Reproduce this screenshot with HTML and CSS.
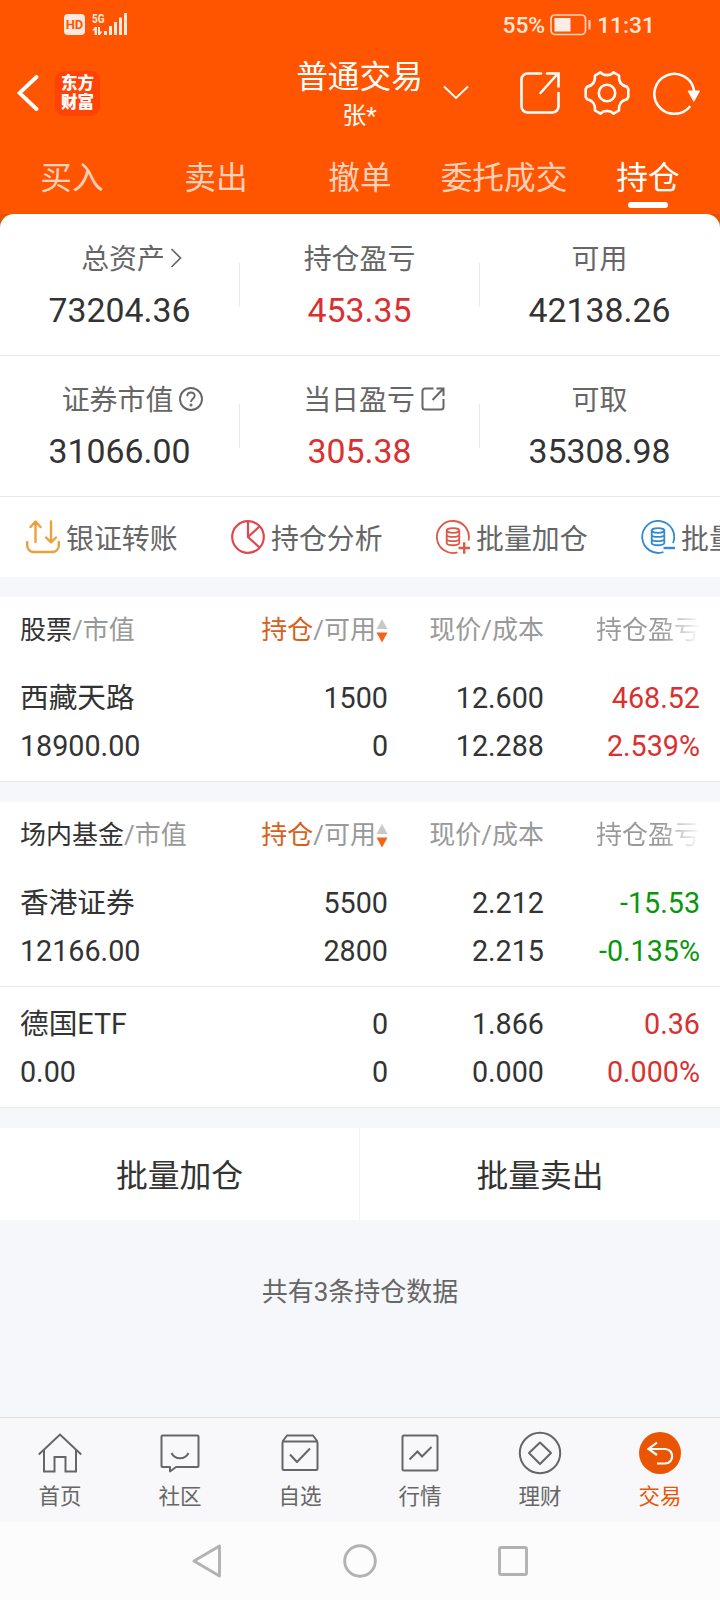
FILE: index.html
```html
<!DOCTYPE html>
<html lang="zh-CN">
<head>
<meta charset="utf-8">
<title>持仓</title>
<link rel="stylesheet" href="styles.css">
</head>
<body>
<div class="screen">
  <header class="top">
    <div class="status">
      <div class="status-left">
        <span class="hd">HD</span>
        <svg class="signal" width="36" height="24" viewBox="0 0 36 24" fill="#ffe9df">
          <text x="0" y="10" font-size="13.500" font-weight="700" textLength="12.500" lengthAdjust="spacingAndGlyphs">5G</text>
          <path d="M0 17.500L3 14h2v8H2.600v-4.500zM6 14h2v4.500h2.400L8 22H6z"/>
          <path d="M12 18h3v4h-3zM17 13h3v9h-3zM22 9h3v13h-3zM27 4.500h3V22h-3zM32 0h3v22h-3z"/>
        </svg>
      </div>
      <div class="status-right">
        <span>55%</span>
        <svg class="battery" width="42" height="22" viewBox="0 0 42 22" fill="none" stroke="#ffd2bd" stroke-width="1.700"><rect x="1" y="1" width="34.500" height="19.500" rx="4"/><rect x="4.500" y="4" width="16" height="13.500" fill="#ffece4" stroke="none"/><path d="M39.500 6v9.500" stroke-width="2.200"/></svg>
        <span>11:31</span>
      </div>
    </div>
    <div class="titlebar">
      <div class="title-left">
        <svg width="22" height="36" viewBox="0 0 22 36" fill="none" stroke="#fff" stroke-width="3.800" stroke-linecap="round"><path d="M19.500 2L2.500 18l17 16"/></svg>
        <div class="logo"><span>东方</span><span>财富</span></div>
      </div>
      <div class="title-mid"><div class="title">普通交易</div><div class="sub">张*</div></div>
      <div class="title-right">
        <svg class="chev" width="26" height="16" viewBox="0 0 26 16" fill="none" stroke="#fff" stroke-width="1.900"><path d="M1 1.500l12 11.500L25 1.500"/></svg>
        <svg class="share" width="42" height="44" viewBox="0 0 42 44" fill="none" stroke="#fff" stroke-width="2.600" stroke-linecap="round"><path d="M22 2.500H8.500a6 6 0 0 0-6 6v27a6 6 0 0 0 6 6h25a6 6 0 0 0 6-6V22M28 2.500h11.500v13M38.500 3L21.500 22"/></svg>
        <svg class="gear" width="46" height="46" viewBox="0 0 46 46" fill="none" stroke="#fff" stroke-width="2.600" stroke-linejoin="round"><path d="M16.500 2.300C19 6 27 6 29.500 2.300L35 5.500C34.500 11.500 37 15.500 43 16.800L44.300 19V27L43 29.200C37 30.500 34.500 34.500 35 40.500L29.500 43.700C27 40 19 40 16.500 43.700L11 40.500C11.500 34.500 9 30.500 3 29.200L1.700 27V19L3 16.800C9 15.500 11.500 11.500 11 5.500Z"/><circle cx="23" cy="23" r="8.200"/></svg>
        <svg class="reload" width="48" height="44" viewBox="0 0 48 44" fill="none" stroke="#fff" stroke-width="2.600" stroke-linecap="round"><path d="M36.500 36A20 20 0 1 1 41 19"/><path d="M35.500 20H46.500L41 30Z" fill="#fff" stroke-width="1"/></svg>
      </div>
    </div>
    <nav class="tabs"><span>买入</span><span>卖出</span><span>撤单</span><span>委托成交</span><span class="on">持仓</span></nav>
  </header>

  <div class="corners"><section class="summary">
    <div class="srow">
      <div class="stat"><div class="label first">总资产<svg class="gt" width="12" height="20" viewBox="0 0 12 20" fill="none" stroke="#666" stroke-width="1.700"><path d="M1.500 1l9 9-9 9"/></svg></div><div class="val">73204.36</div></div>
      <div class="stat"><div class="label">持仓盈亏</div><div class="val red">453.35</div></div>
      <div class="stat"><div class="label">可用</div><div class="val">42138.26</div></div>
    </div>
    <div class="srow">
      <div class="stat"><div class="label first">证券市值<svg class="help" width="24" height="24" viewBox="0 0 24 24" fill="none" stroke="#666" stroke-width="1.900"><circle cx="12" cy="12" r="11"/><path d="M8.300 9.200c0-5 7.400-4.800 7.400-.4 0 3-3.700 3-3.700 6.200"/><circle cx="12" cy="18" r=".6"/></svg></div><div class="val">31066.00</div></div>
      <div class="stat"><div class="label pad">当日盈亏<svg class="out" width="24" height="24" viewBox="0 0 24 24" fill="none" stroke="#666" stroke-width="2"><path d="M12.500 1.500H4A2.500 2.500 0 0 0 1.500 4v16A2.500 2.500 0 0 0 4 22.500h16a2.500 2.500 0 0 0 2.500-2.500v-8M15.500 1.500h7v7.500M22 2L11.500 13"/></svg></div><div class="val red">305.38</div></div>
      <div class="stat"><div class="label">可取</div><div class="val">35308.98</div></div>
    </div>
  </section></div>

  <div class="quick">
    <div class="q"><svg width="34" height="34" viewBox="0 0 34 34" fill="none" stroke="#eba03c" stroke-width="2.400" stroke-linecap="round" stroke-linejoin="round"><path d="M1.200 22v3.500a6.500 6.500 0 0 0 6.500 6.500h18.600a6.500 6.500 0 0 0 6.500-6.500V22M9.500 22V2M4.500 7l5-5.500 5 5.500M25 1.500V22M20 17.500l5 5 5-5"/></svg>银证转账</div>
    <div class="q"><svg width="34" height="34" viewBox="0 0 34 34" fill="none" stroke="#e0474c" stroke-width="2.200"><circle cx="17" cy="17" r="15.800"/><path d="M17 1v16l11.500 10.500M17 17L28.500 6.500"/></svg>持仓分析</div>
    <div class="q"><svg width="34" height="34" viewBox="0 0 34 34" fill="none" stroke="#dc5a45" stroke-width="1.800"><path d="M32.500 20.500A16 16 0 1 0 21.500 32.300"/><ellipse cx="17" cy="10.500" rx="6.300" ry="2.300"/><path d="M10.700 10.500v12.500c0 3 12.600 3 12.600 0V10.500M10.700 14.700c0 3 12.600 3 12.600 0M10.700 18.900c0 3 12.600 3 12.600 0"/><path d="M22.500 28h11.500M28.200 22.200v11.600" stroke-width="2.400"/></svg>批量加仓</div>
    <div class="q"><svg width="34" height="34" viewBox="0 0 34 34" fill="none" stroke="#3289d0" stroke-width="1.800"><path d="M32 23A16 16 0 1 0 22.500 32"/><ellipse cx="17" cy="10.500" rx="6.300" ry="2.300"/><path d="M10.700 10.500v12.500c0 3 12.600 3 12.600 0V10.500M10.700 14.700c0 3 12.600 3 12.600 0M10.700 18.900c0 3 12.600 3 12.600 0"/><path d="M22.500 28h11.500" stroke-width="2.400"/></svg>批量卖出</div>
  </div>

  <section class="table">
    <div class="thead"><span class="c1"><b>股票</b>/市值</span><span class="c2"><em>持仓</em>/可用<svg width="12" height="24" viewBox="0 0 12 24"><path d="M6 0l5.500 10H.5z" fill="#c8c8c8"/><path d="M6 23.500L.5 13.500h11z" fill="#f26419"/></svg></span><span class="c3">现价/成本</span><span class="c4 fade">持仓盈亏</span></div>
    <div class="hold">
      <div class="line"><span class="c1">西藏天路</span><span class="c2">1500</span><span class="c3">12.600</span><span class="c4 red">468.52</span></div>
      <div class="line"><span class="c1">18900.00</span><span class="c2">0</span><span class="c3">12.288</span><span class="c4 red">2.539%</span></div>
    </div>
  </section>

  <section class="table">
    <div class="thead"><span class="c1"><b>场内基金</b>/市值</span><span class="c2"><em>持仓</em>/可用<svg width="12" height="24" viewBox="0 0 12 24"><path d="M6 0l5.500 10H.5z" fill="#c8c8c8"/><path d="M6 23.500L.5 13.500h11z" fill="#f26419"/></svg></span><span class="c3">现价/成本</span><span class="c4 fade">持仓盈亏</span></div>
    <div class="hold">
      <div class="line"><span class="c1">香港证券</span><span class="c2">5500</span><span class="c3">2.212</span><span class="c4 green">-15.53</span></div>
      <div class="line"><span class="c1">12166.00</span><span class="c2">2800</span><span class="c3">2.215</span><span class="c4 green">-0.135%</span></div>
    </div>
    <div class="hold">
      <div class="line"><span class="c1">德国ETF</span><span class="c2">0</span><span class="c3">1.866</span><span class="c4 red">0.36</span></div>
      <div class="line"><span class="c1">0.00</span><span class="c2">0</span><span class="c3">0.000</span><span class="c4 red">0.000%</span></div>
    </div>
  </section>

  <div class="batch"><span>批量加仓</span><span>批量卖出</span></div>
  <div class="total">共有3条持仓数据</div>

  <nav class="dock">
    <div class="d"><svg width="44" height="44" viewBox="0 0 44 44" fill="none" stroke="#666" stroke-width="2"><path d="M.8 23.500L22 3.500l21.200 20M6 19V40.500h10.500V26h11v14.500H38V19"/></svg>首页</div>
    <div class="d"><svg width="44" height="44" viewBox="0 0 44 44" fill="none" stroke="#666" stroke-width="2" stroke-linejoin="round"><path d="M4.500 4.500h35a1 1 0 0 1 1 1v29.500a1 1 0 0 1-1 1H18l-6 4.500V36H4.500a1 1 0 0 1-1-1V5.500a1 1 0 0 1 1-1zM13.500 22c3.500 7 13.500 7 17 0"/></svg>社区</div>
    <div class="d"><svg width="44" height="44" viewBox="0 0 44 44" fill="none" stroke="#666" stroke-width="2" stroke-linejoin="round"><rect x="4.500" y="10.500" width="35" height="28.500" rx="1.500"/><path d="M4.500 10.500L9 4.500h26l4.500 6M12 23.500l7 7.500L32 17.500"/></svg>自选</div>
    <div class="d"><svg width="44" height="44" viewBox="0 0 44 44" fill="none" stroke="#666" stroke-width="2"><rect x="4.500" y="4.500" width="35" height="35" rx="1.500"/><path d="M11.500 28.500l8-8 4.500 5 9.500-9.500"/></svg>行情</div>
    <div class="d"><svg width="44" height="44" viewBox="0 0 44 44" fill="none" stroke="#666" stroke-width="2" stroke-linejoin="round"><circle cx="22" cy="22" r="20.200"/><path d="M22 11.500L33 22l-11 11-11-11z"/></svg>理财</div>
    <div class="d on"><svg width="44" height="44" viewBox="0 0 44 44" fill="none" stroke="#fff" stroke-width="2.200"><circle cx="22" cy="22" r="21" fill="#ea5504" stroke="none"/><path d="M19 11.500L10.500 18 19 24M10.500 18H27c9.500 0 9.500 14.500 0 14.500h-8"/></svg>交易</div>
  </nav>
  <div class="sysnav">
    <svg width="30" height="34" viewBox="0 0 30 34" fill="none" stroke="#b2b2b2" stroke-width="2.900" stroke-linejoin="round"><path d="M27.500 2v30L2 17z"/></svg>
    <svg width="34" height="34" viewBox="0 0 34 34" fill="none" stroke="#b2b2b2" stroke-width="2.900"><circle cx="17" cy="17" r="15.300"/></svg>
    <svg width="30" height="30" viewBox="0 0 30 30" fill="none" stroke="#b2b2b2" stroke-width="2.900"><rect x="1.500" y="1.500" width="27" height="27" rx="1.500"/></svg>
  </div>
</div>
</body>
</html>
```

FILE: styles.css
```css
* { box-sizing: border-box; }
body {
  margin: 0;
  font-family: Roboto, "Noto Sans CJK SC", sans-serif;
  color: #333;
  background: #f6f7fa;
}
svg { display: block; flex: none; }
.screen { width: 720px; height: 1600px; overflow: hidden; display: flex; flex-direction: column; }
.screen > * { flex: none; }

.top { height: 214px; background: #ff5500; color: #fff; }
.status { height: 50px; display: flex; justify-content: space-between; padding: 0 65px 0 64px; color: #ffe5d8; font-size: 22.800px; font-weight: 500; line-height: 51px; }
.status-left { display: flex; gap: 7px; padding-top: 14px; }
.hd { width: 21px; height: 21px; border-radius: 4px; background: #ffe9df; color: #ff5500; font-size: 13px; font-weight: 700; line-height: 22px; text-align: center; }
.signal { margin-top: -1px; overflow: visible; }
.status-right { display: flex; }
.battery { margin: 14px 5px 0 5px; }

.titlebar { height: 88px; display: grid; grid-template-columns: 240px 240px 240px; }
.title-left { display: flex; align-items: center; gap: 16px; padding: 0 0 2px 17px; }
.logo { width: 45px; height: 45px; border-radius: 9px; background: #ff4206; font: 900 16.500px/19px "Noto Sans CJK SC", sans-serif; display: flex; flex-direction: column; align-items: center; padding-top: 2px; }
.title-mid { text-align: center; padding: 9px 1px 0 0; }
.title { font-size: 31.700px; line-height: 38px; }
.sub { font-size: 24px; line-height: 38px; }
.title-right { display: flex; align-items: center; padding-bottom: 3px; }
.chev { margin-left: -37px; margin-right: 50px; }
.gear { margin-left: 23px; }
.reload { margin-left: 23px; }
.tabs { height: 76px; display: grid; grid-template-columns: repeat(5, 144px); text-align: center; font-size: 31.700px; line-height: 82px; color: #ffd0ba; }
.tabs .on { color: #fff; position: relative; }
.tabs .on::after { content: ""; position: absolute; left: 52px; top: 64px; width: 40px; height: 6px; border-radius: 3px; background: #fff; }

.corners { background: linear-gradient(#e65300 20px, #fff 20px); }
.summary { background: #fff; border-radius: 14px 14px 0 0; }
.srow { height: 141px; border-bottom: 1px solid #e9e9e9; display: grid; grid-template-columns: repeat(3, 240px); align-items: center; }
.srow:first-child { height: 142px; }
.stat { height: 88px; text-align: center; display: flex; flex-direction: column; align-items: center; position: relative; }
.stat + .stat::before { content: ""; position: absolute; left: -1px; top: 22px; width: 1px; height: 44px; background: #e9e9e9; }
.label { display: flex; align-items: center; font-size: 27.900px; line-height: 36px; color: #666; white-space: nowrap; padding-top: 1px; margin-right: 1px; }
.first { padding-left: 24px; }
.pad { padding-left: 29px; }
.gt { margin: -4px 0 0 5px; }
.help { margin: -4px -2px 0 6px; }
.out { margin: -4px 0 0 6px; }
.val { font-size: 33.800px; line-height: 40px; margin: 13px 1px 0 0; }
.red { color: #d93030; }
.green { color: #0a960a; }

.quick { height: 80px; background: #fff; display: flex; padding-left: 26px; overflow: hidden; }
.q { flex: none; width: 205px; display: flex; align-items: center; gap: 6px; font-size: 27.900px; color: #666; white-space: nowrap; }

.table { margin-top: 20px; background: #fff; }
.thead { height: 64px; display: grid; grid-template-columns: 220px 148px 156px 156px; margin: 0 20px; line-height: 67px; font-size: 26px; color: #999; white-space: nowrap; }
.thead b { font-weight: 400; color: #333; }
.thead em { font-style: normal; color: #d9601a; }
.thead .c2 { display: flex; justify-content: flex-end; align-items: center; }
.c2, .c3, .c4 { text-align: right; }
.fade { background: linear-gradient(90deg, #999 75%, #f4f4f4 98%); -webkit-background-clip: text; background-clip: text; color: transparent; }
.hold { height: 121px; padding: 14px 20px 0; border-bottom: 1px solid #e9e9e9; font-size: 28.700px; line-height: 47.500px; }
.line { display: grid; grid-template-columns: 220px 148px 156px 156px; }

.batch { height: 92px; margin-top: 20px; background: #fff; display: grid; grid-template-columns: 359px 361px; grid-template-rows: 92px; text-align: center; font-size: 31.800px; line-height: 97px; }
.batch span + span { border-left: 1px solid #f1f1f1; }
.total { height: 197px; padding-top: 53px; text-align: center; font-size: 26px; line-height: 38px; color: #666; }

.dock { height: 105px; background: #f8f8fa; border-top: 1px solid #dfdfdf; display: grid; grid-template-columns: repeat(6, 120px); }
.d { display: flex; flex-direction: column; align-items: center; padding-top: 13px; font-size: 21.500px; line-height: 44px; color: #666; }
.d.on { color: #ea5504; }
.sysnav { height: 78px; background: #fcfcfc; display: flex; justify-content: center; align-items: center; gap: 121px; padding-right: 1px; }
```
